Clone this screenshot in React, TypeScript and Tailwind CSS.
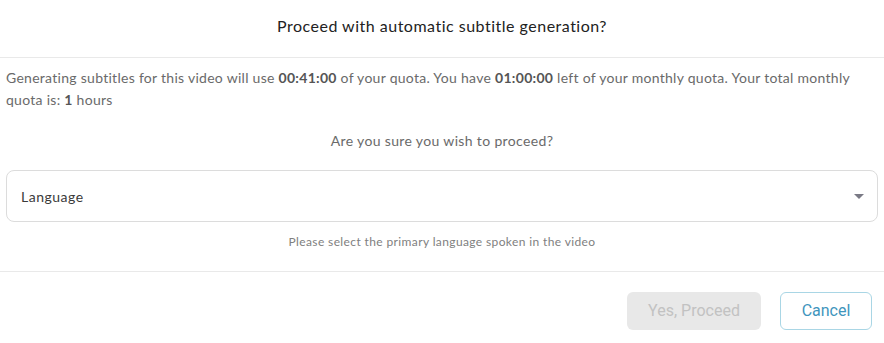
import React from "react";

export default function App() {
  return (
    <div className="w-[884px] h-[343px] bg-white overflow-hidden" style={{ fontFamily: "Lato, 'Open Sans', sans-serif" }}>
      <div className="h-[58px] border-b border-[#e9e9e9] flex items-center justify-center">
        <h2 className="text-[16px] leading-6 text-[#222] tracking-[0.5px] -mt-[6px]">Proceed with automatic subtitle generation?</h2>
      </div>
      <div className="px-[6px] pt-[9px]">
        <p className="text-[14px] leading-[22px] text-[#6a6a6a] tracking-[0.28px]">
          <span>Generating subtitles for this video will use </span>
          <b className="font-bold text-[#555]">00:41:00</b>
          <span> of your quota. You have </span>
          <b className="font-bold text-[#555]">01:00:00</b>
          <span> left of your monthly quota. Your total monthly quota is: </span>
          <b className="font-bold text-[#555]">1</b>
          <span> hours</span>
        </p>
        <p className="mt-[19px] text-center text-[14px] leading-[22px] text-[#6a6a6a] tracking-[0.35px]">Are you sure you wish to proceed?</p>
        <div className="mt-[18px] h-[52px] w-[872px] border border-[#dcdcdc] rounded-[8px] flex items-center justify-between pl-[14px] pr-[13px]">
          <span className="text-[14px] text-[#3a3a3a] tracking-[0.5px]">Language</span>
          <svg width="10" height="5" viewBox="0 0 10 5"><path d="M0 0 L10 0 L5 5 Z" fill="#7a7a85" /></svg>
        </div>
        <p className="mt-[12px] text-center text-[12px] leading-4 text-[#808080] tracking-[0.38px]">Please select the primary language spoken in the video</p>
      </div>
      <div className="mt-[21px] border-t border-[#e9e9e9] flex justify-end gap-[19px] pt-[20px] pr-[12px]" style={{ fontFamily: "Roboto, sans-serif" }}>
        <button className="w-[134px] h-[38px] rounded-[6px] bg-[#e8e8e8] text-[#c2c2c2] text-[16px]">Yes, Proceed</button>
        <button className="w-[92px] h-[38px] rounded-[6px] border border-[#a9d6e5] text-[#3f95bd] text-[16px] bg-white">Cancel</button>
      </div>
    </div>
  );
}
